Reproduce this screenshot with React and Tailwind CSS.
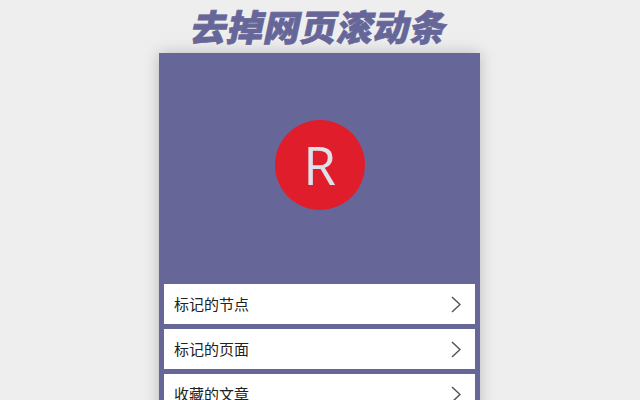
import React from 'react';

const items = ['标记的节点', '标记的页面', '收藏的文章'];

const MenuRow = ({ label }) => (
  <div className="flex h-10 items-center justify-between bg-white pl-2.5 pr-[14px]">
    <span className="text-[15px] text-[#222]">{label}</span>
    <svg width="10" height="17" viewBox="0 0 10 17" fill="none" stroke="#555" strokeWidth="1.5">
      <path d="M1 1 L9 8.5 L1 16" />
    </svg>
  </div>
);

export default function App() {
  return (
    <div className="flex h-[400px] flex-col items-center overflow-hidden bg-[#eeeeee] font-['Open_Sans','Noto_Sans_CJK_SC',sans-serif]">
      <h1 className="flex h-[56px] shrink-0 -skew-x-[12deg] items-center text-[36px] font-black tracking-[0.5px] text-[#666699] [-webkit-text-stroke:0.7px_#666699] mb-[-3px]">
        去掉网页滚动条
      </h1>
      <div className="mr-px w-[321px] shrink-0 bg-[#666699] shadow-[0_0_14px_rgba(0,0,0,0.22)]">
        <div className="flex h-[231px] items-center justify-center pb-[7px]">
          <div className="flex h-[90px] w-[90px] items-center justify-center rounded-full bg-[#e01e2b] text-[53px] text-[#e0e0ea]">
            R
          </div>
        </div>
        <div className="flex flex-col gap-[5px] px-[5px] pb-[5px]">
          {items.map((label) => (
            <MenuRow key={label} label={label} />
          ))}
        </div>
      </div>
    </div>
  );
}
